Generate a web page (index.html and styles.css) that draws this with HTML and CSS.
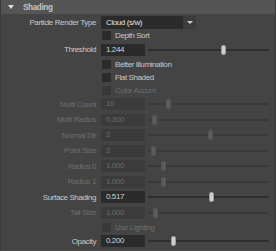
FILE: index.html
```html
<!DOCTYPE html>
<html lang="en">
   <head>
      <title>shading</title>
      <link rel="stylesheet" href="styles.css">
   </head>
   <body>
      <div class="panel">
      	<div class="head">
      		<span class="arrow"></span>
      		<span>Shading</span>
      	</div>
      	
      	<div class="rows">
      		<div class="row drop">
      			<label>Particle Render Type</label>
      			<div class="select"><span>Cloud (s/w)</span><i></i></div>
      		</div>
      		<div class="row check">
      			<span></span>
      			<div class="box"><b></b>Depth Sort</div>
      		</div>
      		<div class="row field tall">
      			<label>Threshold</label>
      			<div class="num">1.244</div>
      			<div class="track"><div class="thumb" style="left:73px"></div></div>
      		</div>
      		<div class="row check">
      			<span></span>
      			<div class="box"><b></b>Better Illumination</div>
      		</div>
      		<div class="row check">
      			<span></span>
      			<div class="box"><b></b>Flat Shaded</div>
      		</div>
      		<div class="row check off">
      			<span></span>
      			<div class="box"><b></b>Color Accum</div>
      		</div>
      		
      		<div class="row field off">
      			<label>Multi Count</label>
      			<div class="num">10</div>
      			<div class="track"><div class="thumb" style="left:18px"></div></div>
      		</div>
      		<div class="row field off">
      			<label>Multi Radius</label>
      			<div class="num">0.300</div>
      			<div class="track"><div class="thumb" style="left:4px"></div></div>
      		</div>
      		<div class="row field off">
      			<label>Normal Dir</label>
      			<div class="num">2</div>
      			<div class="track"><div class="thumb" style="left:60px"></div></div>
      		</div>
      		<div class="row field off">
      			<label>Point Size</label>
      			<div class="num">2</div>
      			<div class="track"><div class="thumb" style="left:3px"></div></div>
      		</div>
      		<div class="row field off">
      			<label>Radius 0</label>
      			<div class="num">1.000</div>
      			<div class="track"><div class="thumb" style="left:13px"></div></div>
      		</div>
      		<div class="row field off">
      			<label>Radius 1</label>
      			<div class="num">1.000</div>
      			<div class="track"><div class="thumb" style="left:13px"></div></div>
      		</div>
      		<div class="row field">
      			<label>Surface Shading</label>
      			<div class="num">0.517</div>
      			<div class="track"><div class="thumb" style="left:61px"></div></div>
      		</div>
      		<div class="row field off">
      			<label>Tail Size</label>
      			<div class="num">1.000</div>
      			<div class="track"><div class="thumb" style="left:5px"></div></div>
      		</div>
      		<div class="row check off">
      			<span></span>
      			<div class="box"><b></b>Use Lighting</div>
      		</div>
      		<div class="row field">
      			<label>Opacity</label>
      			<div class="num">0.200</div>
      			<div class="track"><div class="thumb" style="left:23px"></div></div>
      		</div>
      	</div>
      </div>
   </body>
</html>
```

FILE: styles.css
```css
body{
	margin:0;
	padding:0;
	background:#444;
}
.panel{
	width:276px;
	height:251px;
	box-sizing:border-box;
	background:#444;
	border-left:1px solid #3a3a3a;
	border-right:1px solid #3a3a3a;
	border-bottom:1px solid #4c4c4c;
	font-family:"Liberation Sans",Arial,sans-serif;
	font-size:8px;
	letter-spacing:-0.4px;
	color:#c8c8c8;
	overflow:hidden;
}
.head{
	height:14px;
	background:#555;
	display:flex;
	align-items:center;
	font-weight:bold;
	font-size:8.2px;
	color:#c4c4c4;
}
.arrow{
	width:0;
	height:0;
	margin:0 9px 0 7px;
	border-left:3px solid transparent;
	border-right:3px solid transparent;
	border-top:4px solid #e0e0e0;
}
.rows{
	padding-top:1px;
}
.row{
	display:grid;
	grid-template-columns:100px 44px 1fr;
	align-items:center;
	height:15.5px;
}
.row label{
	text-align:right;
	padding-right:5px;
	white-space:nowrap;
}
.drop{
	height:14px;
}
.check{
	height:13px;
}
.tall{
	height:15.5px;
}
.num{
	height:12px;
	line-height:12px;
	background:#2b2b2b;
	padding-left:5px;
	color:#d4d4d4;
}
.track{
	position:relative;
	height:2px;
	margin:0 6px 0 3px;
	background:#2e2e2e;
}
.thumb{
	position:absolute;
	top:-4px;
	width:5px;
	height:10px;
	box-sizing:border-box;
	border-radius:2px;
	background:#cfcfcf;
	border:1px solid #9a9a9a;
}
.select{
	grid-column:2 / 4;
	display:flex;
	width:95px;
	height:13px;
}
.select span{
	width:77px;
	padding-left:5px;
	line-height:13px;
	background:#2b2b2b;
	color:#e0e0e0;
}
.select i{
	width:13px;
	background:#3c3c3c;
	display:flex;
	align-items:center;
	justify-content:center;
}
.select i:after{
	content:'';
	border-left:3px solid transparent;
	border-right:3px solid transparent;
	border-top:3px solid #d0d0d0;
}
.box{
	grid-column:2 / 4;
	display:flex;
	align-items:center;
	white-space:nowrap;
}
.box b{
	width:9px;
	height:9px;
	margin:0 4px 0 1px;
	background:#2b2b2b;
}
.off label,
.off .box{
	color:#6e6e6e;
}
.off .num{
	background:#3b3b3b;
	color:#6a6a6a;
}
.off .track{
	background:#3a3a3a;
}
.off .thumb{
	background:#5c5c5c;
	border-color:#555;
}
.off .box b{
	background:#383838;
}
```
